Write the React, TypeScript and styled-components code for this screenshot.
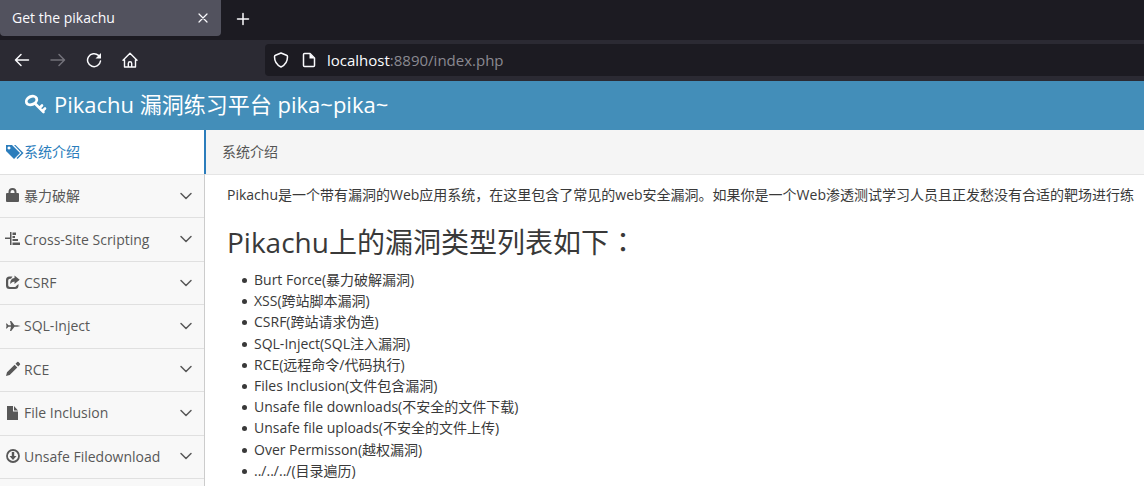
import React from 'react';
import styled, { createGlobalStyle } from 'styled-components';

const Global = createGlobalStyle`
  * { box-sizing: border-box; }
  body {
    margin: 0;
    background: #fff;
    color: #393939;
    font: 14px/21px "Open Sans", "Noto Sans CJK SC", sans-serif;
    overflow: hidden;
  }
  svg { display: block; flex: none; }
`;

const TabStrip = styled.div`
  display: flex;
  align-items: flex-start;
  gap: 10px;
  height: 40px;
  background: #1c1b22;
`;
const Tab = styled.div`
  display: flex;
  align-items: center;
  justify-content: space-between;
  width: 221px;
  height: 36px;
  padding: 0 7px 0 12px;
  border-radius: 0 0 4px 4px;
  background: #52525e;
  color: #fbfbfe;
  line-height: 20px;
`;
const IconButton = styled.button<{ $size?: number }>`
  display: flex;
  align-items: center;
  justify-content: center;
  width: ${p => p.$size ?? 24}px;
  height: ${p => p.$size ?? 24}px;
  padding: 0;
  border: 0;
  background: none;
  color: #fbfbfe;
  &:disabled { color: #73727a; }
`;
const NewTab = styled(IconButton)`
  margin-top: 7px;
`;
const Toolbar = styled.div`
  display: flex;
  align-items: center;
  gap: 12px;
  height: 41px;
  padding: 0 0 1px 10px;
  background: #2b2a33;
`;
const AddressBar = styled.div`
  display: flex;
  flex: 1;
  align-items: center;
  gap: 12px;
  height: 32px;
  margin-left: 111px;
  padding-left: 8px;
  border-radius: 4px 0 0 4px;
  background: #1c1b22;
  color: #fbfbfe;
`;
const Url = styled.div`
  margin-left: -2px;
  color: #8a8991;
  font-size: 15px;
  line-height: 20px;
  span { color: #fbfbfe; }
`;

const Banner = styled.header`
  display: flex;
  align-items: center;
  height: 49px;
  padding: 0 0 3px 24px;
  background: #438eb9;
`;
const Brand = styled.a`
  display: flex;
  align-items: center;
  gap: 7px;
  color: #fff;
  font-size: 22px;
  line-height: 28px;
  text-decoration: none;
  white-space: nowrap;
`;

const Body = styled.div`
  display: flex;
`;
const Sidebar = styled.nav`
  position: relative;
  z-index: 1;
  flex: none;
  width: 205px;
  min-height: calc(100vh - 130px);
  border-right: 1px solid #ccc;
  background: #f8f8f8;
`;
const Menu = styled.ul`
  margin: 0;
  padding: 0;
  list-style: none;
`;
const SubMenu = styled(Menu)`
  display: grid;
  grid-auto-rows: 1fr;
  min-height: 304px;
`;
const MenuItem = styled.li`
  display: flex;
  border-bottom: 1px solid #e0e0e0;
`;
const MenuLink = styled.a<{ $active?: boolean }>`
  display: flex;
  flex: 1;
  align-items: center;
  min-height: 42px;
  padding: 0 10px 1px 5px;
  color: ${p => (p.$active ? '#2b7dbc' : '#585858')};
  text-decoration: none;
  white-space: nowrap;
  ${p => p.$active && `
    min-height: 44px;
    margin-right: -2px;
    border-right: 2px solid #2b7dbc;
    background: #fff;
  `}
`;
const MenuText = styled.span`
  flex: 1;
`;
const IconSlot = styled.span`
  display: flex;
  flex: none;
  width: 19px;
`;

const Main = styled.main`
  flex: 1;
  min-width: 0;
`;
const Crumbs = styled.div`
  height: 45px;
  padding: 11px 17px;
  border-bottom: 1px solid #e5e5e5;
  background: #f5f5f5;
  color: #555;
`;
const Content = styled.article`
  padding: 9px 0 0 22px;
`;
const Intro = styled.p`
  margin: 0;
  overflow: hidden;
  white-space: nowrap;
`;
const Heading = styled.h1`
  margin: 18px 0 8px;
  font-size: 28px;
  font-weight: 400;
  line-height: 38px;
  white-space: nowrap;
`;
const Topics = styled.ul`
  display: grid;
  grid-auto-rows: 1fr;
  min-height: 212px;
  margin: 0;
  padding-left: 15px;
  list-style: none;
`;
const Topic = styled.li`
  display: flex;
  align-items: center;
  gap: 7px;
  &::before {
    content: "";
    width: 5px;
    height: 5px;
    margin-top: 2px;
    border-radius: 50%;
    background: currentColor;
  }
`;

const line = { fill: 'none', stroke: 'currentColor', strokeLinecap: 'round', strokeLinejoin: 'round' } as const;

const Glyph = ({ children, w = 16, h = 16 }: { children: React.ReactNode; w?: number; h?: number }) => (
  <svg width={w} height={h} viewBox={`0 0 ${w} ${h}`} fill="currentColor" aria-hidden="true">{children}</svg>
);

const Stroke = ({ d, width = 1.5 }: { d: string; width?: number }) => <path d={d} {...line} strokeWidth={width} />;

const icons = {
  lock: <Glyph><path fillRule="evenodd" d="M3.500 5V4Q3.500 0 7.500 0T11.500 4v1H13q1 0 1 1V13q0 1-1 1H2q-1 0-1-1V6q0-1 1-1zM5.500 5h4V4q0-2-2-2t-2 2z" /></Glyph>,
  align: <Glyph><path d="M5 1h1.500v13H5zM0 6.500h5V8H0zM7.500 1.500H11V4H7.500zM7.500 5H10v2H7.500zM7.500 8H13v2H7.500zM7.500 11.500H15V14H7.500z" /></Glyph>,
  share: <Glyph><path d="M7.500 1.500H4.500Q1 1.500 1 5v5.500Q1 14 4.500 14h5.500q3.500 0 3.500-3.500V9l-2.300 2q-.3 1-1.500 1H5q-1.800 0-1.800-1.800V5.500q0-1.800 1.800-1.800h1z" /><path d="M9.500 .5l5.200 4.200-5.200 4.200V6.500Q7 6.500 5.200 9 5 3.200 9.500 2.900z" /></Glyph>,
  plane: <Glyph><path d="M1 5.500h.8L3.500 7.200H6L5 3h1.200L9.500 7.200h2.800L15.500 8l-3.200 .8H9.500L6.200 13H5l1-4.200H3.500L1.800 10.500H1L1.500 8z" /></Glyph>,
  pencil: <Glyph><path d="M1 15l1-3.700 7.600-7.600 2.700 2.700L4.700 14zM10.500 2.800l1.700-1.700q.7-.6 1.300 0l1.400 1.400q.6.700 0 1.300l-1.700 1.700z" /></Glyph>,
  file: <Glyph><path d="M2 1h6v5.500h5V15H2zM9 1l4 4.500H9z" /></Glyph>,
  download: <Glyph><circle cx="8" cy="8" r="6" fill="none" stroke="currentColor" strokeWidth="1.800" /><path d="M6.800 4h2.400v4h2.300L8 12 4.500 8h2.300z" /></Glyph>,
  tags: <Glyph w={19}><path fillRule="evenodd" d="M1 1h6l8 8-6 6-8-8zM4 2.500a1.500 1.500 0 1 0 .01 0z" /><path d="M9 1h1.500l8 8-6 6-1-1 5-5z" /></Glyph>,
};

const menu: [keyof typeof icons, string][] = [
  ['lock', '暴力破解'],
  ['align', 'Cross-Site Scripting'],
  ['share', 'CSRF'],
  ['plane', 'SQL-Inject'],
  ['pencil', 'RCE'],
  ['file', 'File Inclusion'],
  ['download', 'Unsafe Filedownload'],
];

const topics = [
  'Burt Force(暴力破解漏洞)',
  'XSS(跨站脚本漏洞)',
  'CSRF(跨站请求伪造)',
  'SQL-Inject(SQL注入漏洞)',
  'RCE(远程命令/代码执行)',
  'Files Inclusion(文件包含漏洞)',
  'Unsafe file downloads(不安全的文件下载)',
  'Unsafe file uploads(不安全的文件上传)',
  'Over Permisson(越权漏洞)',
  '../../../(目录遍历)',
];

export default function App() {
  return (
    <>
      <Global />
      <TabStrip>
        <Tab>
          Get the pikachu
          <IconButton $size={22} aria-label="Close tab"><Glyph><Stroke d="M4 4l8 8M12 4l-8 8" width={1.2} /></Glyph></IconButton>
        </Tab>
        <NewTab aria-label="New tab"><Glyph><Stroke d="M8 2.500v11M2.500 8h11" /></Glyph></NewTab>
      </TabStrip>
      <Toolbar>
        <IconButton aria-label="Back"><Glyph><Stroke d="M14.500 8H1.500M7 2.500L1.500 8 7 13.500" /></Glyph></IconButton>
        <IconButton aria-label="Forward" disabled><Glyph><Stroke d="M1 8h13M9 2.500L14.500 8 9 13.500" /></Glyph></IconButton>
        <IconButton aria-label="Reload"><Glyph><Stroke d="M14.500 9A6.500 6.500 0 1 1 12.500 3.400" /><path d="M15 1v5.500H9.500z" /></Glyph></IconButton>
        <IconButton aria-label="Home"><Glyph><Stroke d="M1 8.200L8 1.200 15 8.200M2.500 7.500v7.500h11V7.500M6.300 15v-3.500q0-1.700 1.700-1.700t1.700 1.700V15" width={1.4} /></Glyph></IconButton>
        <AddressBar>
          <Glyph><Stroke d="M8 1l5.500 2.200q1 .4 1 1.600Q14.500 12 8 15 1.500 12 1.500 4.800q0-1.200 1-1.600z" /></Glyph>
          <Glyph><Stroke d="M3.500 1.500H9L13.500 6v7.500q0 1-1 1h-9q-1 0-1-1v-11q0-1 1-1z" /><path d="M8.500 1.500l5 5h-5z" /></Glyph>
          <Url><span>localhost</span>:8890/index.php</Url>
        </AddressBar>
      </Toolbar>
      <Banner>
        <Brand href="#">
          <Glyph w={23} h={22}><ellipse cx="7.500" cy="7.500" rx="5.500" ry="4" fill="none" stroke="currentColor" strokeWidth="2.800" transform="rotate(-25 7.500 7.500)" /><Stroke d="M11 10.500l8.500 8.500M15.500 15l2.500-2.500M18.500 18l2.500-2.500" width={2.600} /></Glyph>
          Pikachu 漏洞练习平台 pika~pika~
        </Brand>
      </Banner>
      <Body>
        <Sidebar>
          <Menu>
            <MenuItem><MenuLink href="#" $active><IconSlot>{icons.tags}</IconSlot>系统介绍</MenuLink></MenuItem>
          </Menu>
          <SubMenu>
            {menu.map(([icon, label]) => (
              <MenuItem key={label}>
                <MenuLink href="#">
                  <IconSlot>{icons[icon]}</IconSlot>
                  <MenuText>{label}</MenuText>
                  <Glyph><Stroke d="M3 5.500l5 5 5-5" /></Glyph>
                </MenuLink>
              </MenuItem>
            ))}
          </SubMenu>
        </Sidebar>
        <Main>
          <Crumbs>系统介绍</Crumbs>
          <Content>
            <Intro>Pikachu是一个带有漏洞的Web应用系统，在这里包含了常见的web安全漏洞。如果你是一个Web渗透测试学习人员且正发愁没有合适的靶场进行练</Intro>
            <Heading>Pikachu上的漏洞类型列表如下<span lang="zh-TW">：</span></Heading>
            <Topics>{topics.map(t => <Topic key={t}>{t}</Topic>)}</Topics>
          </Content>
        </Main>
      </Body>
    </>
  );
}
